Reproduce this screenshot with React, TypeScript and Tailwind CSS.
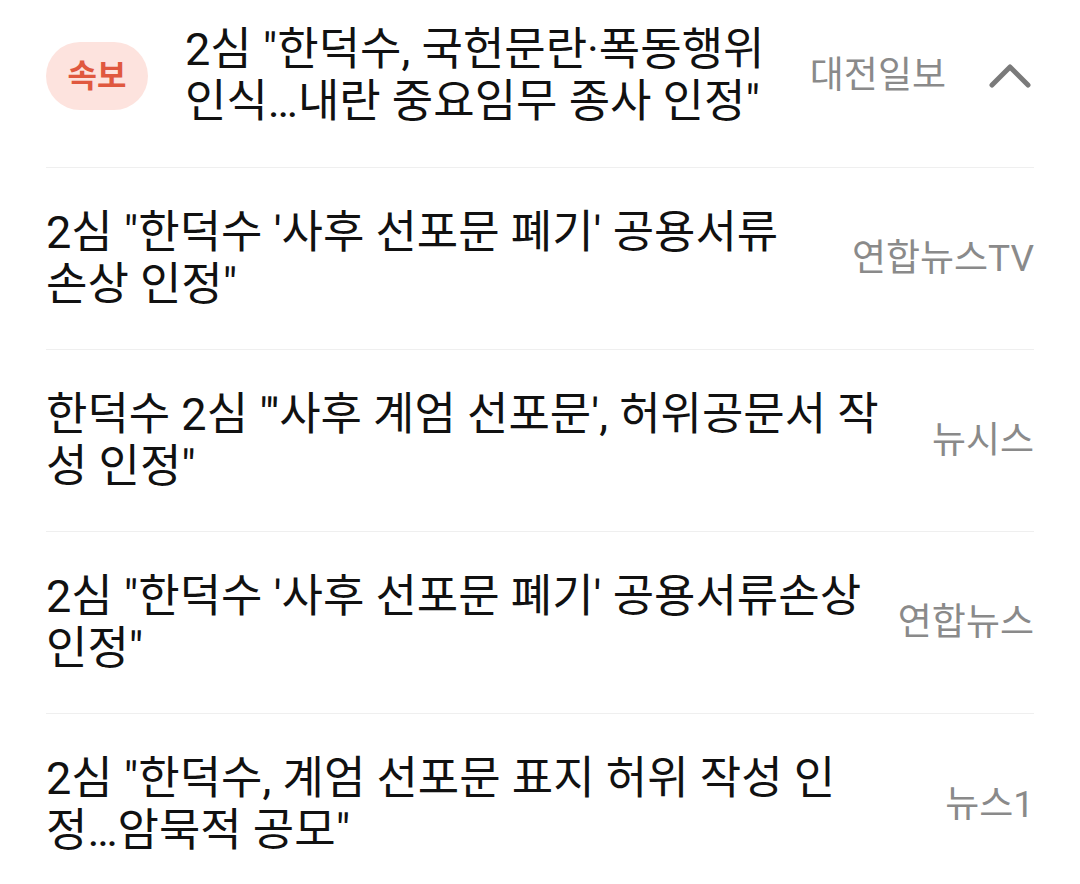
import React from "react";

type Item = { lines: string[]; source: string };

const items: Item[] = [
  { lines: ["2심 \"한덕수 '사후 선포문 폐기' 공용서류", "손상 인정\""], source: "연합뉴스TV" },
  { lines: ["한덕수 2심 \"'사후 계엄 선포문', 허위공문서 작", "성 인정\""], source: "뉴시스" },
  { lines: ["2심 \"한덕수 '사후 선포문 폐기' 공용서류손상", "인정\""], source: "연합뉴스" },
  { lines: ["2심 \"한덕수, 계엄 선포문 표지 허위 작성 인", "정…암묵적 공모\""], source: "뉴스1" },
];

function Title({ lines }: { lines: string[] }) {
  return (
    <div className="min-w-0 flex-1 text-[45px] leading-[52px] text-[#111111] whitespace-nowrap">
      {lines.map((l, i) => (
        <div key={i}>{l}</div>
      ))}
    </div>
  );
}

export default function App() {
  return (
    <div
      className="w-[1080px] h-[884px] overflow-hidden bg-white px-[46px]"
      style={{ fontFamily: '"Roboto", "Noto Sans CJK KR", sans-serif' }}
    >
      <div className="flex h-[168px] items-center border-b border-[#efefef] pb-[16px]">
        <div className="flex h-[68px] w-[102px] shrink-0 items-center justify-center rounded-full bg-[#fde3de] text-[32px] font-bold text-[#e0583f]">
          속보
        </div>
        <div className="ml-[37px] flex min-w-0 flex-1 items-center gap-[40px]">
          <Title lines={["2심 \"한덕수, 국헌문란·폭동행위", "인식…내란 중요임무 종사 인정\""]} />
          <div className="shrink-0 text-[37px] text-[#8a8a8a]">대전일보</div>
          <svg width="44" height="28" viewBox="0 0 44 28" className="ml-[2px] mr-[2px] shrink-0">
            <polyline
              points="4,23 22,5 40,23"
              fill="none"
              stroke="#7a7a7a"
              strokeWidth="5"
              strokeLinecap="round"
              strokeLinejoin="round"
            />
          </svg>
        </div>
      </div>
      {items.map((it, i) => (
        <div
          key={i}
          className="flex h-[182px] items-center gap-[40px] border-b border-[#efefef]"
        >
          <Title lines={it.lines} />
          <div className="shrink-0 text-[37px] text-[#8a8a8a]">{it.source}</div>
        </div>
      ))}
    </div>
  );
}
